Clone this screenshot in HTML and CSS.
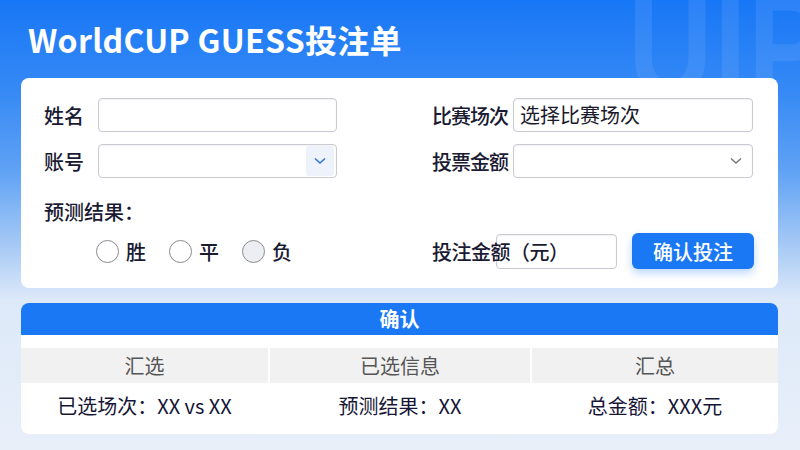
FILE: index.html
```html
<!DOCTYPE html>
<html lang="zh-CN">
<head>
    <meta charset="UTF-8">
    <meta name="viewport" content="width=device-width, initial-scale=1.0">
    <title>WorldCUP GUESS投注单</title>
    <link rel="stylesheet" href="styles.css">
</head>
<body>
    <div class="deco" aria-hidden="true"><span>UIP</span></div>

    <header class="top">
        <h1>WorldCUP GUESS投注单</h1>
    </header>

    <!-- 投注表单 -->
    <section class="card form-card">
        <div class="col col-left">
            <div class="field">
                <label class="lbl">姓名</label>
                <input type="text" class="box">
            </div>
            <div class="field">
                <label class="lbl">账号</label>
                <div class="box select">
                    <span class="arrow arrow-blue">
                        <svg width="12" height="8" viewBox="0 0 12 8"><path d="M1 1.5 L6 6 L11 1.5" fill="none" stroke="#2f74e0" stroke-width="1.6"/></svg>
                    </span>
                </div>
            </div>
            <div class="predict">预测结果：</div>
            <div class="radios">
                <label class="radio"><span class="dot"></span>胜</label>
                <label class="radio"><span class="dot"></span>平</label>
                <label class="radio"><span class="dot dot-on"></span>负</label>
            </div>
        </div>

        <div class="col col-right">
            <div class="field">
                <label class="lbl lbl-wide">比赛场次</label>
                <div class="box box-wide text">选择比赛场次</div>
            </div>
            <div class="field">
                <label class="lbl lbl-wide">投票金额</label>
                <div class="box box-wide select">
                    <span class="arrow">
                        <svg width="12" height="8" viewBox="0 0 12 8"><path d="M1 1.5 L6 6 L11 1.5" fill="none" stroke="#777" stroke-width="1.4"/></svg>
                    </span>
                </div>
            </div>
            <div class="field field-bottom">
                <label class="lbl lbl-amount">投注金额（元）</label>
                <input type="text" class="box box-amount">
                <button class="btn">确认投注</button>
            </div>
        </div>
    </section>

    <!-- 确认信息 -->
    <section class="card confirm-card">
        <div class="confirm-head">确认</div>
        <div class="summary">
            <div class="th">汇选</div>
            <div class="th">已选信息</div>
            <div class="th">汇总</div>
            <div class="td">已选场次：XX vs XX</div>
            <div class="td">预测结果：XX</div>
            <div class="td">总金额：XXX元</div>
        </div>
    </section>
</body>
</html>
```

FILE: styles.css
```css
body {
    margin: 0;
    padding: 0 22px 0 21px;
    height: 450px;
    box-sizing: border-box;
    overflow: hidden;
    position: relative;
    font-family: "Noto Sans CJK SC", "Noto Sans", sans-serif;
    color: #1a1a33;
    background: linear-gradient(180deg, #1877f6 0px, #3589f5 90px, #5fa2f5 170px, #a6c9f5 245px, #dde9f9 300px, #e8eff9 450px);
}

/* big faint letters in the corner */
.deco {
    position: absolute;
    left: 628px;
    top: 0;
    width: 172px;
    height: 78px;
    overflow: hidden;
}

.deco span {
    display: block;
    margin-top: -30px;
    font-family: "Liberation Sans", sans-serif;
    font-weight: bold;
    font-size: 150px;
    letter-spacing: 2px;
    color: rgba(150, 195, 255, 0.16);
    line-height: 1;
    white-space: nowrap;
    transform: scaleX(0.78);
    transform-origin: left top;
}

.top {
    height: 78px;
    position: relative;
}

.top h1 {
    margin: 0;
    padding: 16px 0 0 7px;
    font-size: 32px;
    font-weight: bold;
    color: white;
    line-height: 46px;
    letter-spacing: 0.3px;
}

.card {
    background-color: white;
    border-radius: 8px;
    position: relative;
}

.form-card {
    display: flex;
    padding: 20px 24px 19px 23px;
}

.col {
    display: flex;
    flex-direction: column;
}

.col-left {
    width: 389px;
}

.col-right {
    flex: 1;
}

.field {
    display: flex;
    align-items: center;
    height: 34px;
}

.field + .field {
    margin-top: 12px;
}

.lbl {
    width: 54px;
    font-size: 20px;
    font-weight: 500;
    flex-shrink: 0;
}

.lbl-wide {
    width: 81px;
    letter-spacing: -1px;
}

.box {
    width: 239px;
    height: 34px;
    box-sizing: border-box;
    border: 1px solid #c9cbd2;
    border-radius: 4px;
    background: white;
    box-shadow: inset 0 1px 2px rgba(0, 0, 0, 0.06);
    font-family: inherit;
    font-size: 20px;
    padding: 0 6px;
    margin: 0;
}

.box-wide {
    width: 240px;
}

.text {
    line-height: 32px;
    color: #1a1a2a;
}

.select {
    display: flex;
    justify-content: flex-end;
    align-items: center;
    padding: 0 2px;
}

.arrow {
    width: 28px;
    height: 30px;
    display: flex;
    align-items: center;
    justify-content: center;
    border-radius: 3px;
}

.arrow-blue {
    background-color: #edf2fb;
}

.predict {
    margin-top: 20px;
    font-size: 20px;
    font-weight: 500;
    line-height: 28px;
}

.radios {
    display: flex;
    align-items: center;
    height: 36px;
    margin-top: 7px;
    padding-left: 52px;
    gap: 23px;
}

.radio {
    display: flex;
    align-items: center;
    gap: 7px;
    font-size: 20px;
    font-weight: 500;
}

.dot {
    width: 23px;
    height: 23px;
    box-sizing: border-box;
    border: 1.5px solid #8a8a90;
    border-radius: 50%;
    background: white;
}

.dot-on {
    background-color: #eceef3;
}

.field-bottom {
    margin-top: auto;
    height: 36px;
}

.field + .field-bottom {
    margin-top: auto;
}

.lbl-amount {
    width: 64px;
    white-space: nowrap;
    position: relative;
    z-index: 1;
    letter-spacing: -0.5px;
}

.box-amount {
    width: 121px;
    height: 35px;
}

.btn {
    margin-left: 15px;
    width: 122px;
    height: 36px;
    border: none;
    border-radius: 6px;
    background-color: #1a78f5;
    color: white;
    font-family: inherit;
    font-size: 20px;
    font-weight: 500;
    box-shadow: 0 4px 8px rgba(26, 120, 245, 0.3);
}

.confirm-card {
    margin-top: 15px;
    height: 131px;
    overflow: hidden;
}

.confirm-head {
    height: 32px;
    background-color: #1a78f5;
    color: white;
    text-align: center;
    font-size: 20px;
    font-weight: bold;
    line-height: 32px;
}

.summary {
    display: grid;
    grid-template-columns: 247px 260px 246px;
    column-gap: 2px;
    margin-top: 13px;
}

.th {
    height: 35px;
    background-color: #f1f1f1;
    color: #555;
    text-align: center;
    font-size: 20px;
    line-height: 35px;
}

.td {
    height: 46px;
    text-align: center;
    font-size: 20px;
    line-height: 46px;
    color: #161637;
}
```
